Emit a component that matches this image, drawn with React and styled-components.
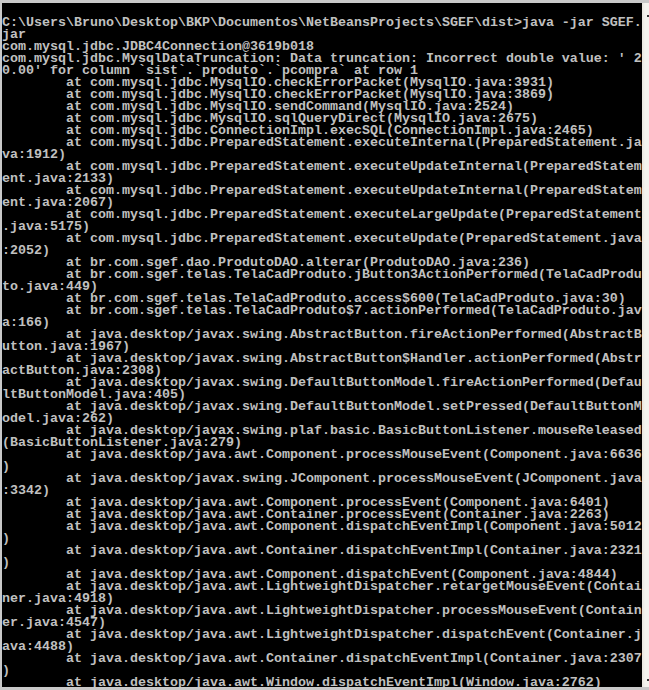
import styled, { createGlobalStyle } from 'styled-components';

const GlobalStyle = createGlobalStyle`
  html, body {
    margin: 0;
    padding: 0;
    background: #d4d0c8;
    overflow: hidden;
  }
`;

const Frame = styled.div`
  width: 649px;
  height: 690px;
  display: flex;
  flex-direction: column;
  background: #d4d0c8;
  border-top: 3px solid #c9c9c9;
  border-bottom: 3px solid #c9c9c9;
  box-sizing: border-box;
`;

const Body = styled.div`
  flex: 1;
  display: flex;
  min-height: 0;
  border-left: 2px solid #c9c9c9;
`;

const Console = styled.pre`
  flex: 1;
  margin: 0;
  padding: 14px 0 0 0;
  background: #000;
  color: #c0c0c0;
  font-family: "Liberation Mono", "DejaVu Sans Mono", monospace;
  font-size: 13.333px;
  font-weight: bold;
  line-height: 12px;
  white-space: pre;
  overflow: hidden;
`;

const Line = styled.div`
  height: 12px;
`;

const Scrollbar = styled.div`
  width: 7px;
  display: flex;
  flex-direction: column;
  justify-content: space-between;
  align-items: flex-end;
  padding: 12px 0 6px;
  background: linear-gradient(to right, #e8e6df 0, #f4f3ee 3px, #f4f3ee 100%);
  box-sizing: border-box;
`;

const Tick = styled.div`
  width: 2px;
  height: 2px;
  background: #3a3a3a;
`;

const output = [
  'C:\\Users\\Bruno\\Desktop\\BKP\\Documentos\\NetBeansProjects\\SGEF\\dist>java -jar SGEF.jar',
  'com.mysql.jdbc.JDBC4Connection@3619b018',
  "com.mysql.jdbc.MysqlDataTruncation: Data truncation: Incorrect double value: ' 20.00' for column `sist`.`produto`.`pcompra` at row 1",
  '\tat com.mysql.jdbc.MysqlIO.checkErrorPacket(MysqlIO.java:3931)',
  '\tat com.mysql.jdbc.MysqlIO.checkErrorPacket(MysqlIO.java:3869)',
  '\tat com.mysql.jdbc.MysqlIO.sendCommand(MysqlIO.java:2524)',
  '\tat com.mysql.jdbc.MysqlIO.sqlQueryDirect(MysqlIO.java:2675)',
  '\tat com.mysql.jdbc.ConnectionImpl.execSQL(ConnectionImpl.java:2465)',
  '\tat com.mysql.jdbc.PreparedStatement.executeInternal(PreparedStatement.java:1912)',
  '\tat com.mysql.jdbc.PreparedStatement.executeUpdateInternal(PreparedStatement.java:2133)',
  '\tat com.mysql.jdbc.PreparedStatement.executeUpdateInternal(PreparedStatement.java:2067)',
  '\tat com.mysql.jdbc.PreparedStatement.executeLargeUpdate(PreparedStatement.java:5175)',
  '\tat com.mysql.jdbc.PreparedStatement.executeUpdate(PreparedStatement.java:2052)',
  '\tat br.com.sgef.dao.ProdutoDAO.alterar(ProdutoDAO.java:236)',
  '\tat br.com.sgef.telas.TelaCadProduto.jButton3ActionPerformed(TelaCadProduto.java:449)',
  '\tat br.com.sgef.telas.TelaCadProduto.access$600(TelaCadProduto.java:30)',
  '\tat br.com.sgef.telas.TelaCadProduto$7.actionPerformed(TelaCadProduto.java:166)',
  '\tat java.desktop/javax.swing.AbstractButton.fireActionPerformed(AbstractButton.java:1967)',
  '\tat java.desktop/javax.swing.AbstractButton$Handler.actionPerformed(AbstractButton.java:2308)',
  '\tat java.desktop/javax.swing.DefaultButtonModel.fireActionPerformed(DefaultButtonModel.java:405)',
  '\tat java.desktop/javax.swing.DefaultButtonModel.setPressed(DefaultButtonModel.java:262)',
  '\tat java.desktop/javax.swing.plaf.basic.BasicButtonListener.mouseReleased(BasicButtonListener.java:279)',
  '\tat java.desktop/java.awt.Component.processMouseEvent(Component.java:6636)',
  '\tat java.desktop/javax.swing.JComponent.processMouseEvent(JComponent.java:3342)',
  '\tat java.desktop/java.awt.Component.processEvent(Component.java:6401)',
  '\tat java.desktop/java.awt.Container.processEvent(Container.java:2263)',
  '\tat java.desktop/java.awt.Component.dispatchEventImpl(Component.java:5012)',
  '\tat java.desktop/java.awt.Container.dispatchEventImpl(Container.java:2321)',
  '\tat java.desktop/java.awt.Component.dispatchEvent(Component.java:4844)',
  '\tat java.desktop/java.awt.LightweightDispatcher.retargetMouseEvent(Container.java:4918)',
  '\tat java.desktop/java.awt.LightweightDispatcher.processMouseEvent(Container.java:4547)',
  '\tat java.desktop/java.awt.LightweightDispatcher.dispatchEvent(Container.java:4488)',
  '\tat java.desktop/java.awt.Container.dispatchEventImpl(Container.java:2307)',
  '\tat java.desktop/java.awt.Window.dispatchEventImpl(Window.java:2762)',
];

// the console wraps hard at 80 columns
const COLS = 80;
const rows = output.flatMap((text) => {
  const s = text.replace(/\t/g, '        ');
  const out = [];
  for (let i = 0; i < s.length; i += COLS) out.push(s.slice(i, i + COLS));
  return out;
});

function App() {
  return (
    <>
      <GlobalStyle />
      <Frame>
        <Body>
          <Console>
            {rows.map((r, i) => (
              <Line key={i}>{r}</Line>
            ))}
          </Console>
          <Scrollbar>
            <Tick />
            <Tick />
          </Scrollbar>
        </Body>
      </Frame>
    </>
  );
}

export default App;
